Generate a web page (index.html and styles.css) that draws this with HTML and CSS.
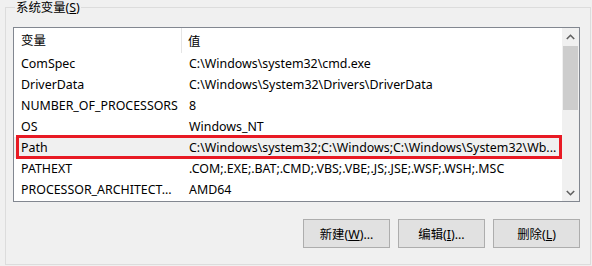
FILE: index.html
```html
<!DOCTYPE html>
<html lang="zh-CN">
<head>
  <meta charset="UTF-8">
  <title>系统变量</title>
  <link rel="stylesheet" href="styles.css">
</head>
<body>
  <fieldset class="group">
    <legend>系统变量(<u>S</u>)</legend>

    <div class="listbox">
      <div class="list">
        <div class="row head">
          <div class="cell name">变量</div>
          <div class="cell value">值</div>
        </div>
        <div class="row">
          <div class="cell name">ComSpec</div>
          <div class="cell value">C:\Windows\system32\cmd.exe</div>
        </div>
        <div class="row">
          <div class="cell name">DriverData</div>
          <div class="cell value">C:\Windows\System32\Drivers\DriverData</div>
        </div>
        <div class="row">
          <div class="cell name">NUMBER_OF_PROCESSORS</div>
          <div class="cell value">8</div>
        </div>
        <div class="row">
          <div class="cell name">OS</div>
          <div class="cell value">Windows_NT</div>
        </div>
        <div class="row selected">
          <div class="cell name">Path</div>
          <div class="cell value">C:\Windows\system32;C:\Windows;C:\Windows\System32\Wb...</div>
        </div>
        <div class="row">
          <div class="cell name">PATHEXT</div>
          <div class="cell value">.COM;.EXE;.BAT;.CMD;.VBS;.VBE;.JS;.JSE;.WSF;.WSH;.MSC</div>
        </div>
        <div class="row">
          <div class="cell name">PROCESSOR_ARCHITECT...</div>
          <div class="cell value">AMD64</div>
        </div>
      </div>

      <div class="scrollbar">
        <div class="arrow">
          <svg width="9" height="6" viewBox="0 0 9 6"><polyline points="0.8,5 4.5,1.3 8.2,5" fill="none" stroke="#606060" stroke-width="1.6"/></svg>
        </div>
        <div class="track">
          <div class="thumb"></div>
        </div>
        <div class="arrow">
          <svg width="9" height="6" viewBox="0 0 9 6"><polyline points="0.8,1 4.5,4.7 8.2,1" fill="none" stroke="#606060" stroke-width="1.6"/></svg>
        </div>
      </div>
    </div>

    <div class="buttons">
      <button>新建(<u>W</u>)...</button>
      <button>编辑(<u>I</u>)...</button>
      <button>删除(<u>L</u>)</button>
    </div>
  </fieldset>
</body>
</html>
```

FILE: styles.css
```css
body {
  margin: 0;
  background-color: #f0f0f0;
  font-family: "Noto Sans", "Noto Sans CJK SC", sans-serif;
  font-size: 12.4px;
  color: #000000;
}

.group {
  margin: 0 0 0 5px;
  width: 586px;
  height: 265px;
  box-sizing: border-box;
  border: 1px solid #dcdcdc;
  padding: 12px 10px 0 7px;
}

legend {
  padding: 0 1px;
  margin-left: 2px;
  line-height: 15px;
  color: #000000;
}

.listbox {
  display: flex;
  height: 175px;
  border: 1px solid #828790;
  background-color: #ffffff;
  box-sizing: border-box;
}

.list {
  flex: 1;
  overflow: hidden;
}

.row {
  display: flex;
  height: 21px;
  align-items: center;
  position: relative;
}

.row.head {
  height: 25px;
}

.cell {
  white-space: nowrap;
  overflow: hidden;
}

.name {
  width: 168px;
  padding-left: 7px;
  box-sizing: border-box;
}

.value {
  flex: 1;
  padding-left: 7px;
}

.head .name {
  border-right: 1px solid #e5e5e5;
  height: 25px;
  line-height: 25px;
}

.head .value {
  padding-left: 6px;
}

.row.selected {
  background-color: #f0f0f0;
}

.row.selected::after {
  content: "";
  position: absolute;
  left: 2px;
  right: 0;
  top: -2px;
  bottom: -1px;
  border: 3px solid #e81a24;
}

.scrollbar {
  width: 17px;
  display: flex;
  flex-direction: column;
  background-color: #f0f0f0;
}

.arrow {
  height: 17px;
  display: flex;
  align-items: center;
  justify-content: center;
}

.track {
  flex: 1;
}

.thumb {
  height: 64px;
  margin: 1px 1px 0 1px;
  background-color: #cdcdcd;
}

.buttons {
  display: flex;
  justify-content: flex-end;
  gap: 8px;
  margin-top: 17px;
}

button {
  width: 87px;
  height: 29px;
  font-family: "Noto Sans", "Noto Sans CJK SC", sans-serif;
  font-size: 12.4px;
  color: #000000;
  background-color: #e1e1e1;
  border: 1px solid #adadad;
  padding: 0;
}
```
